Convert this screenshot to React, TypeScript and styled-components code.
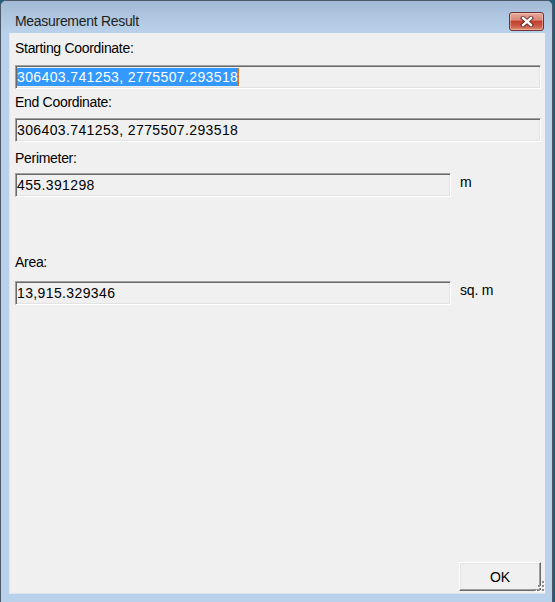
import React from "react";
import styled, { createGlobalStyle } from "styled-components";

const Global = createGlobalStyle`
  html, body { margin: 0; padding: 0; }
  body {
    width: 555px;
    height: 602px;
    overflow: hidden;
    background: #1d5f78;
    font-family: "Liberation Sans", Arial, sans-serif;
  }
`;

const Window = styled.div`
  box-sizing: border-box;
  width: 553px;
  height: 602px;
  display: flex;
  flex-direction: column;
  background: #b9d1ea;
  border: 1px solid #4a5868;
  border-bottom: none;
  border-radius: 6px 6px 0 0;
  overflow: hidden;
`;

const TitleBar = styled.div`
  box-sizing: border-box;
  height: 32px;
  flex: none;
  display: flex;
  align-items: center;
  justify-content: space-between;
  padding: 8px 8px 0 14px;
  background: linear-gradient(#a2bad5 0%, #b0c8e1 55%, #b9d1ea 100%);
`;

const Title = styled.div`
  font-family: "Liberation Sans", Arial, sans-serif;
  font-size: 14px;
  color: #1e1e1e;
  letter-spacing: -0.3px;
  line-height: 16px;
`;

const CloseButton = styled.div`
  box-sizing: border-box;
  width: 35px;
  height: 19px;
  border: 1px solid #6b3434;
  border-radius: 3px;
  display: flex;
  align-items: center;
  justify-content: center;
  background: linear-gradient(
    #e9a89a 0%,
    #d98a7a 40%,
    #c4402f 50%,
    #c95844 75%,
    #dc8d73 100%
  );
  box-shadow: inset 0 0 0 1px rgba(255, 220, 210, 0.45);
`;

const Frame = styled.div`
  flex: 1;
  display: flex;
  padding: 0 7px 8px 8px;
  min-height: 0;
`;

const Client = styled.div`
  position: relative;
  box-sizing: border-box;
  flex: 1;
  display: flex;
  flex-direction: column;
  background: #f0f0f0;
  border-left: 1px solid #dce6f2;
  border-bottom: 1px solid #dce6f2;
  padding: 7px 4px 0 5px;
  font-family: "Liberation Sans", Arial, sans-serif;
  font-size: 14px;
  color: #000;
`;

const Label = styled.div<{ $gap: number }>`
  margin-top: ${(p) => p.$gap}px;
  line-height: 16px;
  height: 16px;
  letter-spacing: -0.3px;
  white-space: nowrap;
`;

const Row = styled.div<{ $gap: number }>`
  margin-top: ${(p) => p.$gap}px;
  display: flex;
  align-items: flex-start;
  gap: 9px;
`;

const Field = styled.div<{ $width?: number }>`
  box-sizing: border-box;
  height: 24px;
  ${(p) => (p.$width ? `width: ${p.$width}px;` : "flex: 1;")}
  display: flex;
  align-items: center;
  padding-left: 1px;
  border-top: 1px solid #a0a0a0;
  border-left: 1px solid #a0a0a0;
  border-right: 1px solid #ffffff;
  border-bottom: 1px solid #ffffff;
  box-shadow: inset 1px 1px 0 #696969, inset -1px -1px 0 #e3e3e3;
  background: #f0f0f0;
  line-height: 16px;
  letter-spacing: 0.38px;
  white-space: nowrap;
`;

const Selected = styled.span`
  background: #3399ff;
  color: #fff;
  line-height: 18px;
  border-right: 1px solid #d2762a;
`;

const Unit = styled.div`
  padding-top: 1px;
  line-height: 16px;
  letter-spacing: -0.2px;
  white-space: nowrap;
`;

const OkButton = styled.div`
  box-sizing: border-box;
  margin-top: auto;
  margin-bottom: 2px;
  align-self: flex-end;
  width: 82px;
  height: 29px;
  display: flex;
  align-items: center;
  justify-content: center;
  background: #f0f0f0;
  border-top: 1px solid #ffffff;
  border-left: 1px solid #ffffff;
  border-right: 1px solid #696969;
  border-bottom: 1px solid #696969;
  box-shadow: inset -1px -1px 0 #a0a0a0, inset 1px 1px 0 #e3e3e3;
  font-size: 14px;
  letter-spacing: -0.2px;
`;

const Grip = styled.svg`
  position: absolute;
  right: 0;
  bottom: 0;
  width: 15px;
  height: 15px;
`;

function CloseGlyph() {
  return (
    <svg width="14" height="11" viewBox="0 0 14 11">
      <path d="M3 2 L11 9 M11 2 L3 9" stroke="#5a2222" strokeWidth="4.2" strokeLinecap="square" />
      <path d="M3 2 L11 9 M11 2 L3 9" stroke="#ffffff" strokeWidth="2.4" strokeLinecap="square" />
    </svg>
  );
}

function GripGlyph() {
  const dots: [number, number][] = [
    [12, 3],
    [12, 7], [8, 7],
    [12, 11], [8, 11], [4, 11],
  ];
  return (
    <Grip viewBox="0 0 15 15">
      {dots.map(([x, y], i) => (
        <g key={i}>
          <rect x={x + 1} y={y + 1} width="2" height="2" fill="#ffffff" />
          <rect x={x} y={y} width="2" height="2" fill="#8c8c8c" />
        </g>
      ))}
    </Grip>
  );
}

export default function App() {
  return (
    <>
      <Global />
      <Window>
        <TitleBar>
          <Title>Measurement Result</Title>
          <CloseButton>
            <CloseGlyph />
          </CloseButton>
        </TitleBar>
        <Frame>
          <Client>
            <Label $gap={0}>Starting Coordinate:</Label>
            <Row $gap={9}>
              <Field>
                <Selected>306403.741253, 2775507.293518</Selected>
              </Field>
            </Row>
            <Label $gap={5}>End Coordinate:</Label>
            <Row $gap={8}>
              <Field>306403.741253, 2775507.293518</Field>
            </Row>
            <Label $gap={8}>Perimeter:</Label>
            <Row $gap={7}>
              <Field $width={436}>455.391298</Field>
              <Unit>m</Unit>
            </Row>
            <Label $gap={57}>Area:</Label>
            <Row $gap={11}>
              <Field $width={436}>13,915.329346</Field>
              <Unit>sq. m</Unit>
            </Row>
            <OkButton>OK</OkButton>
            <GripGlyph />
          </Client>
        </Frame>
      </Window>
    </>
  );
}
